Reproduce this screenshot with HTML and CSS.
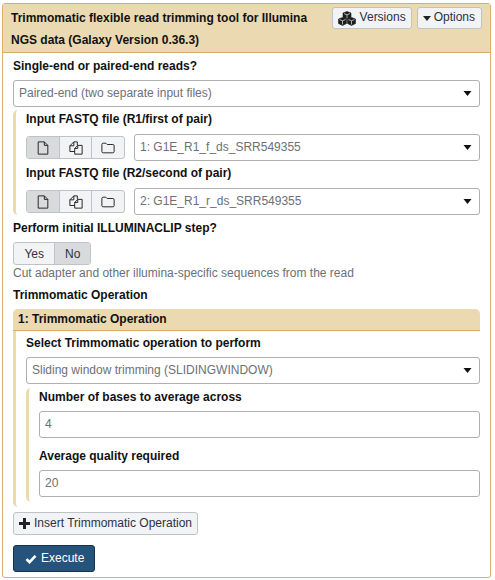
FILE: index.html
```html
<!DOCTYPE html>
<html lang="en">
<head>
<meta charset="utf-8">
<title>Trimmomatic</title>
<link rel="stylesheet" href="styles.css">
</head>
<body>
<svg class="defs" width="0" height="0" aria-hidden="true">
  <symbol id="i-file" viewBox="0 0 14 16"><path d="M1.500 1h7l4 4v10h-11z M8.500 1v4h4" fill="none" stroke="currentColor" stroke-width="1.100" stroke-linejoin="round"/></symbol>
  <symbol id="i-files" viewBox="0 0 16 16"><path d="M9.500 4.800V1H5.500L1 5.500V12h5.500 M5.500 1v4.500H1 M6.500 15V8.500L10 5h5v10z M10 5v3.500H6.500" fill="none" stroke="currentColor" stroke-width="1.100" stroke-linejoin="round"/></symbol>
  <symbol id="i-folder" viewBox="0 0 16 14"><path d="M1 3c0-1 .5-1.500 1.500-1.500h3l1.500 1.500h6.500c1 0 1.500.5 1.500 1.500v6.500c0 1-.5 1.500-1.500 1.500h-11c-1 0-1.500-.5-1.500-1.500z" fill="none" stroke="currentColor" stroke-width="1.100"/></symbol>
  <symbol id="i-caret" viewBox="0 0 8 5"><path d="M0 0h8L4 5z" fill="currentColor"/></symbol>
</svg>
<main class="card">
  <header class="card-head">
    <div class="head-actions">
      <span class="btn small"><svg class="cubes" viewBox="0 0 18 15"><g fill="#1c1c1c" stroke="#1c1c1c" stroke-width=".6" stroke-linejoin="round"><path d="M9 .5 13 2v4.500L9 8 5 6.500V2z"/><path d="M4.500 6.500 8.500 8v4.500l-4 2-4-2V8z"/><path d="M13.500 6.500l4 1.500v4.500l-4 2-4-2V8z"/></g><g fill="none" stroke="#eee" stroke-width=".7"><path d="M6 2.600 9 3.800l3-1.200M9 3.800V7"/><path d="M1.500 8.600l3 1.200 3-1.200M4.500 9.800V13.500"/><path d="M10.500 8.600l3 1.200 3-1.200M13.500 9.800V13.500"/></g></svg><span class="up">Versions</span></span>
      <span class="btn small opts"><svg class="caret-sm"><use href="#i-caret"/></svg><span class="up">Options</span></span>
    </div>
    <div class="title"><b>Trimmomatic flexible read trimming tool for Illumina NGS data (Galaxy Version 0.36.3)</b></div>
  </header>
  <div class="card-body">
    <div class="label">Single-end or paired-end reads?</div>
    <div class="select"><span class="up">Paired-end (two separate input files)</span><svg class="caret"><use href="#i-caret"/></svg></div>

    <section class="group files-group">
      <div class="label">Input FASTQ file (R1/first of pair)</div>
      <div class="file-row">
        <div class="seg">
          <span class="seg-btn active"><svg class="ic"><use href="#i-file"/></svg></span>
          <span class="seg-btn"><svg class="ic"><use href="#i-files"/></svg></span>
          <span class="seg-btn"><svg class="ic"><use href="#i-folder"/></svg></span>
        </div>
        <div class="select grow"><span class="up">1: G1E_R1_f_ds_SRR549355</span><svg class="caret"><use href="#i-caret"/></svg></div>
      </div>
      <div class="label">Input FASTQ file (R2/second of pair)</div>
      <div class="file-row">
        <div class="seg">
          <span class="seg-btn active"><svg class="ic"><use href="#i-file"/></svg></span>
          <span class="seg-btn"><svg class="ic"><use href="#i-files"/></svg></span>
          <span class="seg-btn"><svg class="ic"><use href="#i-folder"/></svg></span>
        </div>
        <div class="select grow"><span class="up">2: G1E_R1_r_ds_SRR549355</span><svg class="caret"><use href="#i-caret"/></svg></div>
      </div>
    </section>

    <div class="label clip-label">Perform initial ILLUMINACLIP step?</div>
    <div class="toggle"><span class="tog">Yes</span><span class="tog on">No</span></div>
    <div class="hint">Cut adapter and other illumina-specific sequences from the read</div>
    <div class="label op-label">Trimmomatic Operation</div>

    <section class="repeat">
      <div class="repeat-head">1: Trimmomatic Operation</div>
      <div class="repeat-body">
        <div class="label">Select Trimmomatic operation to perform</div>
        <div class="select"><span class="up">Sliding window trimming (SLIDINGWINDOW)</span><svg class="caret"><use href="#i-caret"/></svg></div>
        <div class="group inner">
          <div class="label">Number of bases to average across</div>
          <div class="input"><span class="up">4</span></div>
          <div class="label second">Average quality required</div>
          <div class="input"><span class="up">20</span></div>
        </div>
      </div>
    </section>

    <div class="insert-row"><span class="btn insert"><svg class="plus" viewBox="0 0 11 11"><path d="M4 0h3v4h4v3H7v4H4V7H0V4h4z" fill="#222"/></svg><span class="up">Insert Trimmomatic Operation</span></span></div>
    <div class="exec-row"><span class="execute"><svg class="check" viewBox="0 0 12 10"><path d="M1.500 5.200 4.500 8.200 10.500 1.800" fill="none" stroke="#fff" stroke-width="2.600"/></svg><span class="up">Execute</span></span></div>
  </div>
</main>
</body>
</html>
```
FILE: styles.css
```css
* { box-sizing: border-box; }
html, body { margin: 0; padding: 0; background: #fff; }
body {
  font-family: "Liberation Sans", Arial, sans-serif;
  font-size: 12px;
  line-height: 18px;
  color: #2c3143;
  padding: 3px 4px 3px 2px;
}
.defs { position: absolute; }
.up { padding-bottom: 2px; }
.card {
  width: 489px;
  height: 575px;
  border: 1px solid #d4b26a;
  border-radius: 3px;
}
.card-head {
  height: 49px;
  background: #ebd9b2;
  border-bottom: 1px solid #d4b26a;
  padding: 3px 8px 0 8px;
  color: #111;
}
.title { line-height: 22px; font-size: 12px; }
.head-actions { float: right; display: flex; gap: 5px; margin-left: 8px; }
.btn {
  display: inline-flex;
  align-items: center;
  background: #f2f3f4;
  border: 1px solid #bfc3c7;
  border-radius: 3px;
  color: #2c3143;
}
.btn.small { height: 22px; padding: 0 5px; font-size: 12px; }
.btn.small.opts { padding: 0 6px 0 5px; }
.cubes { width: 18px; height: 15px; margin-right: 4px; }
.caret-sm { width: 8px; height: 5px; margin-right: 3px; color: #222; }
.card-body { padding: 4px 10px 0; }
.label { font-weight: bold; color: #111; font-size: 12px; line-height: 18px; }
.select {
  display: flex;
  align-items: center;
  justify-content: space-between;
  height: 27px;
  margin-top: 5px;
  padding: 0 7px 0 5px;
  background: #fff;
  border: 1px solid #aeb0b3;
  border-radius: 3px;
  color: #6b7078;
}
.select.grow { flex: 1; margin-top: 0; }
.caret { width: 9px; height: 5px; color: #111; }
.group { border-left: 3px solid #ebd9b2; border-radius: 5px 0 0 5px; }
.files-group { margin-top: 5px; padding-left: 10px; }
.files-group .label { margin-top: -3px; margin-bottom: 6px; }
.files-group .label:first-child { margin-top: -2px; }
.file-row { display: flex; align-items: center; gap: 9px; height: 27px; margin-bottom: 6px; }
.file-row:last-child { margin-bottom: 0; }
.seg {
  display: flex;
  width: 99px;
  height: 23px;
  border: 1px solid #bfc3c7;
  border-radius: 3px;
  background: #f2f3f4;
  overflow: hidden;
}
.seg-btn { flex: 1 1 0; display: flex; align-items: center; justify-content: center; border-left: 1px solid #bfc3c7; color: #222; }
.seg-btn:first-child { border-left: 0; }
.seg-btn.active { background: #d8dadc; }
.ic { width: 14px; height: 14px; }
.clip-label { margin-top: 4px; }
.toggle { display: flex; width: 78px; height: 23px; margin-top: 5px; border: 1px solid #bfc3c7; border-radius: 3px; background: #f2f3f4; overflow: hidden; }
.tog { display: flex; align-items: center; justify-content: center; width: 41px; color: #2c3143; }
.tog.on { width: 36px; background: #d8dadc; border-left: 1px solid #bfc3c7; }
.hint { color: #6b7078; margin-top: -1px; }
.op-label { margin-top: 4px; }
.repeat { margin-top: 5px; border-left: 3px solid #ebd9b2; border-radius: 5px 5px 0 5px; }
.repeat-head { margin-left: -3px; height: 22px; line-height: 20px; padding-left: 5px; background: #ebd9b2; border-bottom: 1px solid #d4b26a; border-radius: 5px 5px 0 0; font-weight: bold; color: #111; }
.repeat-body { padding: 3px 0 5px 10px; }
.inner { margin-top: 4px; padding-left: 10px; padding-bottom: 5px; }
.inner .label.second { margin-top: 9px; }
.input { height: 27px; margin-top: 5px; padding-left: 5px; display: flex; align-items: center; border: 1px solid #aeb0b3; border-radius: 3px; color: #6b7078; }
.insert-row { margin-top: 5px; display: flex; }
.insert { height: 23px; padding: 0 5px; }
.plus { width: 11px; height: 11px; margin-right: 4px; }
.exec-row { margin-top: 10px; display: flex; }
.execute { display: inline-flex; align-items: center; height: 27px; padding: 0 10px 0 11px; background: #25537b; border: 1px solid #14324c; border-radius: 3px; color: #fff; }
.check { width: 12px; height: 10px; margin-right: 4px; }
```
